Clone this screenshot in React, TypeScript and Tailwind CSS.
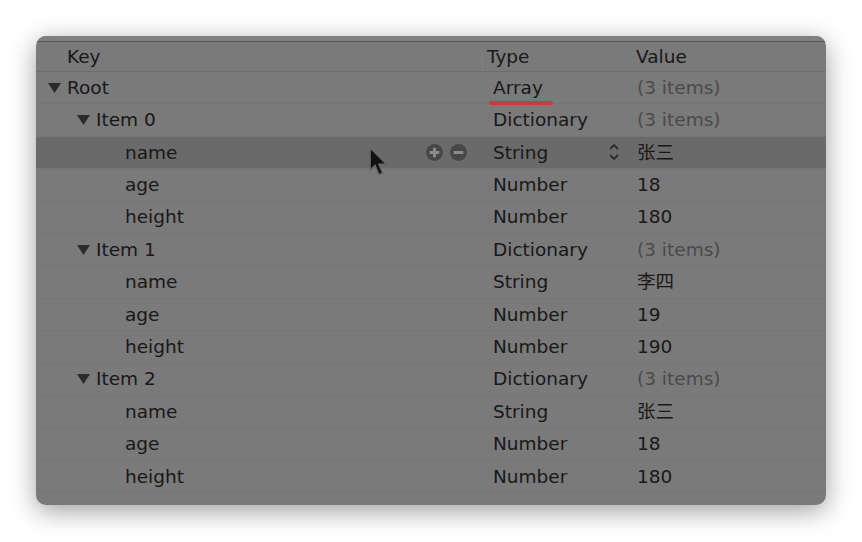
import React from 'react';

type Row = {
  key: string;
  level: 0 | 1 | 2;
  type: string;
  value: string;
  dim?: boolean;
  selected?: boolean;
  mark?: boolean;
};

const rows: Row[] = [
  { key: 'Root', level: 0, type: 'Array', value: '(3 items)', dim: true, mark: true },
  { key: 'Item 0', level: 1, type: 'Dictionary', value: '(3 items)', dim: true },
  { key: 'name', level: 2, type: 'String', value: '张三', selected: true },
  { key: 'age', level: 2, type: 'Number', value: '18' },
  { key: 'height', level: 2, type: 'Number', value: '180' },
  { key: 'Item 1', level: 1, type: 'Dictionary', value: '(3 items)', dim: true },
  { key: 'name', level: 2, type: 'String', value: '李四' },
  { key: 'age', level: 2, type: 'Number', value: '19' },
  { key: 'height', level: 2, type: 'Number', value: '190' },
  { key: 'Item 2', level: 1, type: 'Dictionary', value: '(3 items)', dim: true },
  { key: 'name', level: 2, type: 'String', value: '张三' },
  { key: 'age', level: 2, type: 'Number', value: '18' },
  { key: 'height', level: 2, type: 'Number', value: '180' },
];

const Disclosure = () => (
  <svg width="13" height="10" viewBox="0 0 13 10" className="shrink-0">
    <polygon points="0,0 13,0 6.5,10" fill="#2b2b2b" />
  </svg>
);

const RoundBtn = ({ plus }: { plus?: boolean }) => (
  <svg width="17" height="17" viewBox="0 0 16 16">
    <circle cx="8" cy="8" r="8" fill="#474747" />
    <rect x="3.5" y="6.6" width="9" height="2.8" fill="#8c8c8c" />
    {plus && <rect x="6.6" y="3.5" width="2.8" height="9" fill="#8c8c8c" />}
  </svg>
);

const Stepper = () => (
  <svg width="12" height="22" viewBox="0 0 12 22">
    <polyline points="2,8 6,4 10,8" fill="none" stroke="#2b2b2b" strokeWidth="1.8" />
    <polyline points="2,14 6,18 10,14" fill="none" stroke="#2b2b2b" strokeWidth="1.8" />
  </svg>
);

// mouse pointer sitting over the selected row
const Cursor = () => (
  <svg width="20" height="31" viewBox="0 0 18 28" className="absolute left-[333px] top-[111px]">
    <path d="M1,1 L1,21 L5.5,16.5 L9,25 L12.2,23.6 L8.8,15.4 L15.4,15.4 Z" fill="#111" stroke="#666" strokeWidth="1.2" />
  </svg>
);

const indent = ['pl-[12px]', 'pl-[41px]', 'pl-[89px]'];

export default function App() {
  return (
    <div
      className="w-[862px] h-[542px] bg-white pl-[36px] pt-[36px]"
      style={{ fontFamily: '"DejaVu Sans", "Noto Sans CJK SC", sans-serif' }}
    >
      <div className="relative w-[790px] h-[469px] rounded-[10px] overflow-hidden bg-[#7a7a7a] shadow-[0_6px_26px_rgba(0,0,0,0.38)] text-[18.5px] text-[#181818]">
        <div className="h-[5px] bg-[#808080]" />
        <div className="h-[1px] bg-[#585858]" />
        <div className="flex h-[30px] items-center border-b border-[#6e6e6e]">
          <div className="w-[447px] pl-[31px] h-full flex items-center border-r border-[#808080]">Key</div>
          <div className="w-[147px] pl-[4px]">Type</div>
          <div className="flex-1 pl-[6px]">Value</div>
        </div>
        {rows.map((r, i) => (
          <div
            key={i}
            className={`flex h-[32.4px] items-center border-b border-[#757575] ${r.selected ? 'bg-[#6a6a6a]' : ''}`}
          >
            <div className={`w-[447px] flex items-center ${indent[r.level]}`}>
              {r.level < 2 && <Disclosure />}
              <span className={r.level < 2 ? 'ml-[6px]' : ''}>{r.key}</span>
              {r.selected && (
                <div className="ml-auto mr-[16px] flex gap-[7px]">
                  <RoundBtn plus />
                  <RoundBtn />
                </div>
              )}
            </div>
            <div className="w-[147px] pl-[10px] flex items-center">
              <span className="relative">
                {r.type}
                {r.mark && (
                  <span className="absolute left-[-4px] right-[-10px] bottom-[-3px] h-[4px] rounded-full bg-[#cc3a40]" />
                )}
              </span>
              {r.selected && (
                <span className="ml-auto mr-[10px] flex">
                  <Stepper />
                </span>
              )}
            </div>
            <div className={`flex-1 pl-[7px] ${r.dim ? 'text-[#4a4a4a]' : ''}`}>{r.value}</div>
          </div>
        ))}
        <Cursor />
      </div>
    </div>
  );
}
